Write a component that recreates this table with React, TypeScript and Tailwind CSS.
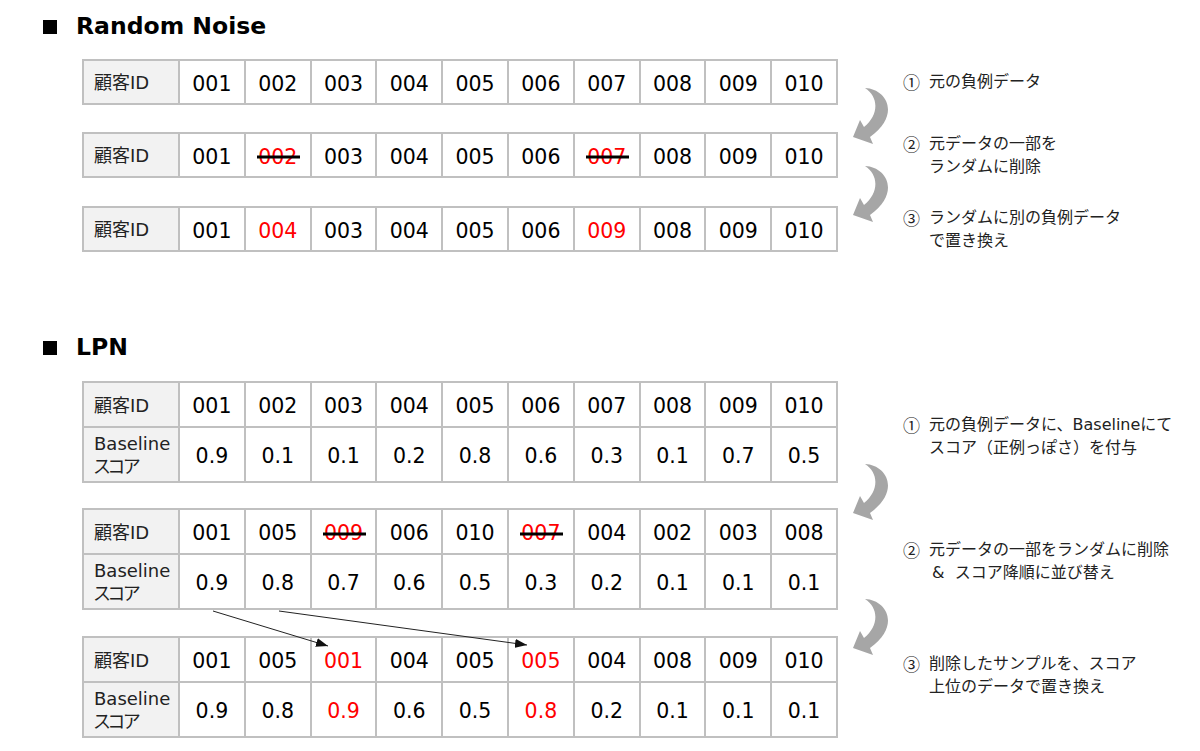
import React, { Fragment } from "react";

type Cell = { v: string; red: boolean; strike: boolean };
const c = (s: string): Cell[] =>
  s.split(" ").map((t) => ({
    v: t.replace(/[!*]/g, ""),
    red: /[!*]/.test(t),
    strike: t.includes("*"),
  }));

type Row = { label: React.ReactNode; h: string; cells: Cell[] };

const ScoreLabel = () => (
  <div className="flex flex-col leading-[23px]">
    <span>Baseline</span>
    <span className="[font-feature-settings:'palt'] tracking-[-2px]">スコア</span>
  </div>
);

function Table({ rows }: { rows: Row[] }) {
  return (
    <div className="grid w-[756px] grid-cols-[96px_repeat(10,minmax(0,1fr))] border-l-2 border-t-2 border-[#c0c0c0]">
      {rows.map((r, i) => (
        <Fragment key={i}>
          <div
            className={`${r.h} flex items-center border-b-2 border-r-2 border-[#c0c0c0] bg-[#f2f2f2] pl-[10px] pt-[1px] text-[18px] text-[#222]`}
          >
            {r.label}
          </div>
          {r.cells.map((cell, j) => (
            <div
              key={j}
              className={`${r.h} flex items-center justify-center border-b-2 border-r-2 border-[#c0c0c0] bg-white`}
            >
              <span
                className={`relative translate-y-[2px] text-[20.5px] leading-none ${cell.red ? "text-[#ff0000]" : "text-black"}`}
              >
                {cell.v}
                {cell.strike && (
                  <span className="absolute left-[-1px] right-[-3px] top-1/2 h-[3px] -translate-y-1/2 bg-black" />
                )}
              </span>
            </div>
          ))}
        </Fragment>
      ))}
    </div>
  );
}

function CurveArrow({ className }: { className: string }) {
  return (
    <svg className={className} width="40" height="57" viewBox="0 0 40 57">
      <path
        d="M14,1 C36,2 50,28 19,50 L22,57 L2,50 L9,33 L13,40 C28,28 28,10 14,1 Z"
        fill="#a6a6a6"
      />
    </svg>
  );
}

function Step({ n, lines, className }: { n: string; lines: React.ReactNode[]; className: string }) {
  return (
    <div className={`flex text-[16px] leading-[23px] text-[#222] ${className}`}>
      <span className="w-[26px] shrink-0 font-['Noto_Sans_CJK_JP',sans-serif] text-[17px]">{n}</span>
      <div className="flex flex-col whitespace-nowrap">
        {lines.map((l, i) => (
          <span key={i}>{l}</span>
        ))}
      </div>
    </div>
  );
}

function Header({ title, className }: { title: string; className: string }) {
  return (
    <div className={`flex h-[28px] items-center pl-[43px] ${className}`}>
      <div className="h-[14px] w-[14px] bg-black" />
      <span className="ml-[19px] text-[23.5px] font-bold leading-none text-black">{title}</span>
    </div>
  );
}

const ID = "顧客ID";

export default function App() {
  const rn1: Row[] = [{ label: ID, h: "h-[44px]", cells: c("001 002 003 004 005 006 007 008 009 010") }];
  const rn2: Row[] = [{ label: ID, h: "h-[44px]", cells: c("001 002* 003 004 005 006 007* 008 009 010") }];
  const rn3: Row[] = [{ label: ID, h: "h-[44px]", cells: c("001 004! 003 004 005 006 009! 008 009 010") }];

  const lpnA: Row[] = [
    { label: ID, h: "h-[45px]", cells: c("001 002 003 004 005 006 007 008 009 010") },
    { label: <ScoreLabel />, h: "h-[55px]", cells: c("0.9 0.1 0.1 0.2 0.8 0.6 0.3 0.1 0.7 0.5") },
  ];
  const lpnB: Row[] = [
    { label: ID, h: "h-[45px]", cells: c("001 005 009* 006 010 007* 004 002 003 008") },
    { label: <ScoreLabel />, h: "h-[55px]", cells: c("0.9 0.8 0.7 0.6 0.5 0.3 0.2 0.1 0.1 0.1") },
  ];
  const lpnC: Row[] = [
    { label: ID, h: "h-[45px]", cells: c("001 005 001! 004 005 005! 004 008 009 010") },
    { label: <ScoreLabel />, h: "h-[55px]", cells: c("0.9 0.8 0.9! 0.6 0.5 0.8! 0.2 0.1 0.1 0.1") },
  ];

  return (
    <div className="flex h-[751px] w-[1200px] flex-col overflow-hidden bg-white font-['DejaVu_Sans','Noto_Sans_CJK_JP',sans-serif]">
      <Header title="Random Noise" className="mt-[13px]" />

      <div className="mt-[18px] flex pl-[82px]">
        <div className="flex w-[756px] flex-col">
          <Table rows={rn1} />
          <div className="mt-[27px]">
            <Table rows={rn2} />
          </div>
          <div className="mt-[28px]">
            <Table rows={rn3} />
          </div>
        </div>
        <div className="ml-[13px] flex w-[40px] flex-col">
          <CurveArrow className="mt-[28px]" />
          <CurveArrow className="mt-[21px]" />
        </div>
        <div className="ml-[12px] flex flex-col">
          <Step n="①" lines={["元の負例データ"]} className="mt-[11px]" />
          <Step n="②" lines={["元データの一部を", "ランダムに削除"]} className="mt-[39px]" />
          <Step n="③" lines={["ランダムに別の負例データ", "で置き換え"]} className="mt-[28px]" />
        </div>
      </div>

      <Header title="LPN" className="mt-[82px]" />

      <div className="mt-[19px] flex pl-[82px]">
        <div className="relative flex w-[756px] flex-col">
          <Table rows={lpnA} />
          <div className="mt-[25px]">
            <Table rows={lpnB} />
          </div>
          <div className="mt-[26px]">
            <Table rows={lpnC} />
          </div>
          <svg
            className="pointer-events-none absolute left-0 top-0 overflow-visible"
            width="756"
            height="357"
            viewBox="0 0 756 357"
          >
            <defs>
              <marker
                id="ah"
                markerWidth="12"
                markerHeight="9"
                refX="12"
                refY="4.5"
                orient="auto"
                markerUnits="userSpaceOnUse"
              >
                <path d="M0,0 L12,4.5 L0,9 Z" fill="#111" />
              </marker>
            </defs>
            <line x1="131" y1="230" x2="246" y2="265" stroke="#222" strokeWidth="1" markerEnd="url(#ah)" />
            <line x1="197" y1="230" x2="445" y2="264" stroke="#222" strokeWidth="1" markerEnd="url(#ah)" />
          </svg>
        </div>
        <div className="ml-[13px] flex w-[40px] flex-col">
          <CurveArrow className="mt-[82px]" />
          <CurveArrow className="mt-[78px]" />
        </div>
        <div className="ml-[12px] flex flex-col">
          <Step
            n="①"
            lines={["元の負例データに、Baselineにて", "スコア（正例っぽさ）を付与"]}
            className="mt-[32px]"
          />
          <Step
            n="②"
            lines={["元データの一部をランダムに削除", <span className="pl-[3px]">&amp;&nbsp; スコア降順に並び替え</span>]}
            className="mt-[79px]"
          />
          <Step
            n="③"
            lines={["削除したサンプルを、スコア", "上位のデータで置き換え"]}
            className="mt-[68px]"
          />
        </div>
      </div>
    </div>
  );
}
